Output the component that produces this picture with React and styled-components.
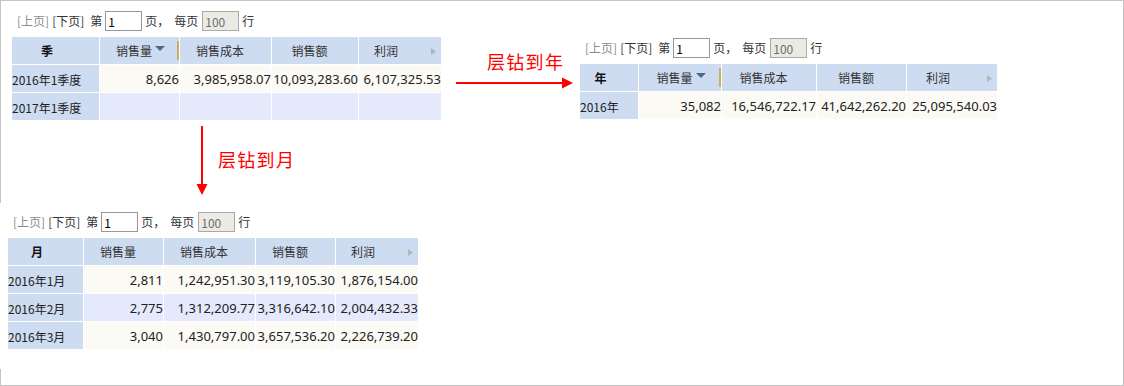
import React from 'react';
import styled, { createGlobalStyle } from 'styled-components';

const Global = createGlobalStyle`
  html, body { margin: 0; padding: 0; background: #fff; }
  body {
    font-family: "Noto Sans CJK SC", "Noto Sans", sans-serif;
    font-size: 12px;
    color: #333;
  }
`;

const Frame = styled.div`
  width: 1124px;
  height: 386px;
  box-sizing: border-box;
  border: 1px solid #c4c4c4;
  background: #fff;
`;

const TopArea = styled.div`
  display: flex;
  align-items: flex-start;
  height: 202px;
`;

const LeftColumn = styled.div`
  display: flex;
  flex-direction: column;
  margin-left: 11px;
  padding-top: 10px;
`;

const Panel = styled.div`
  display: flex;
  flex-direction: column;
  margin-left: ${p => p.$left || 0}px;
  padding-top: ${p => p.$top || 0}px;
`;

const LowerPanel = styled.div`
  margin-left: -1px;
  width: 440px;
  height: 166px;
  box-sizing: border-box;
  background: #fff;
  padding: 9px 0 0 8px;
  display: flex;
  flex-direction: column;
`;

/* pager */
const PagerBar = styled.div`
  display: flex;
  align-items: center;
  height: 20px;
  padding-left: 5px;
  margin-bottom: 6px;
  white-space: nowrap;
  font-size: 12px;
  line-height: 20px;
  color: #333;
`;

const PagerText = styled.span`
  color: ${p => (p.$muted ? '#8c8c8c' : '#333')};
  margin-right: ${p => p.$mr || 0}px;
`;

const PageInput = styled.input`
  box-sizing: border-box;
  width: 37px;
  height: 20px;
  margin: 0 ${p => p.$mr || 0}px 0 0;
  padding: 0 2px;
  border: 1px solid ${p => (p.disabled ? '#a9a9a9' : '#979797')};
  background: ${p => (p.disabled ? '#ebebe4' : '#fff')};
  color: ${p => (p.disabled ? '#6d6d6d' : '#000')};
  font-family: "Noto Sans CJK SC", "Noto Sans", sans-serif;
  font-size: 12px;
  outline: none;
  border-radius: 0;
`;

const Pager = () => (
  <PagerBar>
    <PagerText $muted $mr={3}>[上页]</PagerText>
    <PagerText $mr={6}>[下页]</PagerText>
    <PagerText $mr={3}>第</PagerText>
    <PageInput defaultValue="1" $mr={3} />
    <PagerText $mr={5}>页，</PagerText>
    <PagerText $mr={4}>每页</PagerText>
    <PageInput defaultValue="100" disabled $mr={3} />
    <PagerText>行</PagerText>
  </PagerBar>
);

/* table */
const Grid = styled.div`
  display: grid;
  grid-template-columns: ${p => p.$cols};
  grid-auto-rows: 27px;
  gap: 1px;
  width: max-content;
  background: #fff;
`;

const HeadCell = styled.div`
  position: relative;
  display: flex;
  align-items: center;
  justify-content: center;
  background: #cddcf0;
  padding-right: ${p => p.$pr}px;
  font-size: 12px;
  font-weight: ${p => (p.$bold ? 700 : 400)};
  color: ${p => (p.$bold ? '#111' : '#333')};
  white-space: nowrap;
`;

const HeadLabel = styled.span`
  position: relative;
`;

const SortArrow = styled.svg`
  position: absolute;
  left: calc(100% + 3px);
  top: 4px;
`;

const ResizeBar = styled.div`
  position: absolute;
  right: 0;
  top: 4px;
  bottom: 4px;
  width: 2px;
  background: #cbae5e;
`;

const ScrollArrow = styled.svg`
  position: absolute;
  right: 5px;
  top: 11px;
`;

const LabelCell = styled.div`
  display: flex;
  align-items: center;
  padding-top: 2px;
  background: #cddcf0;
  font-size: 12px;
  color: #222;
  white-space: nowrap;
`;

const NumCell = styled.div`
  display: flex;
  align-items: center;
  justify-content: flex-end;
  background: ${p => (p.$alt ? '#e4eafc' : '#fbfaf5')};
  font-family: "Noto Sans", "Noto Sans CJK SC", sans-serif;
  font-size: 13px;
  color: #222;
  white-space: nowrap;
`;

const DataTable = ({ cols, dim, sorted, rows }) => {
  const measures = ['销售量', '销售成本', '销售额', '利润'];
  return (
    <Grid $cols={cols}>
      <HeadCell $pr={17} $bold>{dim}</HeadCell>
      {measures.map((m, i) => (
        <HeadCell key={m} $pr={i === 3 ? 28 : 11}>
          <HeadLabel>
            {m}
            {sorted && i === 0 && (
              <SortArrow width="10" height="5" viewBox="0 0 10 5">
                <polygon points="0,0 10,0 5,5" fill="#4b6a8e" />
              </SortArrow>
            )}
          </HeadLabel>
          {sorted && i === 0 && <ResizeBar />}
          {i === 3 && (
            <ScrollArrow width="5" height="7" viewBox="0 0 5 7">
              <polygon points="0,0 5,3.5 0,7" fill="#b5b5b5" />
            </ScrollArrow>
          )}
        </HeadCell>
      ))}
      {rows.map((r, ri) => (
        <React.Fragment key={ri}>
          <LabelCell>{r[0]}</LabelCell>
          {r.slice(1).map((v, ci) => (
            <NumCell key={ci} $alt={ri % 2 === 1}>{v}</NumCell>
          ))}
        </React.Fragment>
      ))}
    </Grid>
  );
};

/* drill annotations */
const DownNote = styled.div`
  display: flex;
  align-items: flex-start;
  margin: 6px 0 0 184px;
`;

const NoteText = styled.div`
  color: #f00;
  font-size: 18px;
  line-height: 18px;
  letter-spacing: 1.3px;
  white-space: nowrap;
  margin: ${p => p.$m};
`;

const RightNote = styled.div`
  display: flex;
  flex-direction: column;
  width: 117px;
  margin-left: 15px;
  padding-top: 51px;
`;

const ArrowSvg = styled.svg`
  display: block;
  flex: none;
  margin: ${p => p.$m || 0};
`;

const quarterRows = [
  ['2016年1季度', '8,626', '3,985,958.07', '10,093,283.60', '6,107,325.53'],
  ['2017年1季度', '', '', '', ''],
];

const yearRows = [
  ['2016年', '35,082', '16,546,722.17', '41,642,262.20', '25,095,540.03'],
];

const monthRows = [
  ['2016年1月', '2,811', '1,242,951.30', '3,119,105.30', '1,876,154.00'],
  ['2016年2月', '2,775', '1,312,209.77', '3,316,642.10', '2,004,432.33'],
  ['2016年3月', '3,040', '1,430,797.00', '3,657,536.20', '2,226,739.20'],
];

export default function App() {
  return (
    <>
      <Global />
      <Frame>
        <TopArea>
          <LeftColumn>
            <Pager />
            <DataTable cols="87px 79px 91px 86px 82px" dim="季" sorted rows={quarterRows} />
            <DownNote>
              <ArrowSvg width="12" height="69" viewBox="0 0 12 69">
                <rect x="5" y="0" width="2" height="60" fill="#f00" />
                <polygon points="0.5,58 11.5,58 6,69" fill="#f00" />
              </ArrowSvg>
              <NoteText $m="24px 0 0 10px">层钻到月</NoteText>
            </DownNote>
          </LeftColumn>
          <RightNote>
            <NoteText $m="0 0 0 31px">层钻到年</NoteText>
            <ArrowSvg width="117" height="12" viewBox="0 0 117 12" $m="7px 0 0 0">
              <rect x="0" y="5" width="108" height="2" fill="#f00" />
              <polygon points="106,0.5 106,11.5 117,6" fill="#f00" />
            </ArrowSvg>
          </RightNote>
          <Panel $left={7} $top={37}>
            <Pager />
            <DataTable cols="58px 82px 94px 89px 90px" dim="年" sorted rows={yearRows} />
          </Panel>
        </TopArea>
        <LowerPanel>
          <Pager />
          <DataTable cols="75px 79px 91px 79px 82px" dim="月" rows={monthRows} />
        </LowerPanel>
      </Frame>
    </>
  );
}
